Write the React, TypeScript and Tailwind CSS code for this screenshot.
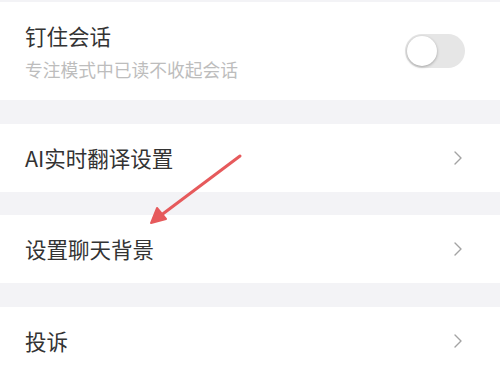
import { ReactNode } from 'react';

const font = { fontFamily: '"Noto Sans CJK SC", "Noto Sans", sans-serif' };

function Chevron() {
  return (
    <svg width="10" height="16" viewBox="0 0 10 16" fill="none">
      <path d="M2 2l6 6-6 6" stroke="#a3a3a3" strokeWidth="1.4" strokeLinecap="round" strokeLinejoin="round" />
    </svg>
  );
}

function Row({ children, h }: { children: ReactNode; h: string }) {
  return <div className={`flex items-center justify-between bg-white pl-[25px] pr-[37px] ${h}`}>{children}</div>;
}

export default function App() {
  return (
    <div className="relative w-[500px] h-[375px] overflow-hidden bg-[#f3f3f6]" style={font}>
      <div className="flex flex-col pt-[2px]">
        <div className="flex items-center justify-between bg-white pl-[25px] pr-[35px] h-[98px]">
          <div className="flex flex-col">
            <span className="text-[21.5px] leading-[28px] text-[#333]">钉住会话</span>
            <span className="mt-[8px] text-[17.75px] leading-[22px] text-[#bdbdbd]">专注模式中已读不收起会话</span>
          </div>
          <div className="w-[60px] h-[34px] rounded-full bg-[#e6e6e6] p-[2px] flex items-center">
            <div className="w-[30px] h-[30px] rounded-full bg-white shadow-[0_1px_3px_rgba(0,0,0,0.3)]" />
          </div>
        </div>
        <div className="h-[24px]" />
        <Row h="h-[68px]">
          <span className="text-[21.5px] text-[#333]">AI实时翻译设置</span>
          <Chevron />
        </Row>
        <div className="h-[23px]" />
        <Row h="h-[68px]">
          <span className="text-[21.5px] text-[#333]">设置聊天背景</span>
          <Chevron />
        </Row>
        <div className="h-[24px]" />
        <Row h="h-[68px]">
          <span className="text-[21.5px] text-[#333]">投诉</span>
          <Chevron />
        </Row>
      </div>
      <svg className="absolute left-0 top-0" width="500" height="375" viewBox="0 0 500 375">
        <line x1="240" y1="156" x2="160" y2="216" stroke="#e65a5c" strokeWidth="3" strokeLinecap="round" />
        <path d="M151 223 L157 208 L166 219 Z" fill="#e65a5c" stroke="#e65a5c" strokeWidth="2" strokeLinejoin="round" />
      </svg>
    </div>
  );
}
